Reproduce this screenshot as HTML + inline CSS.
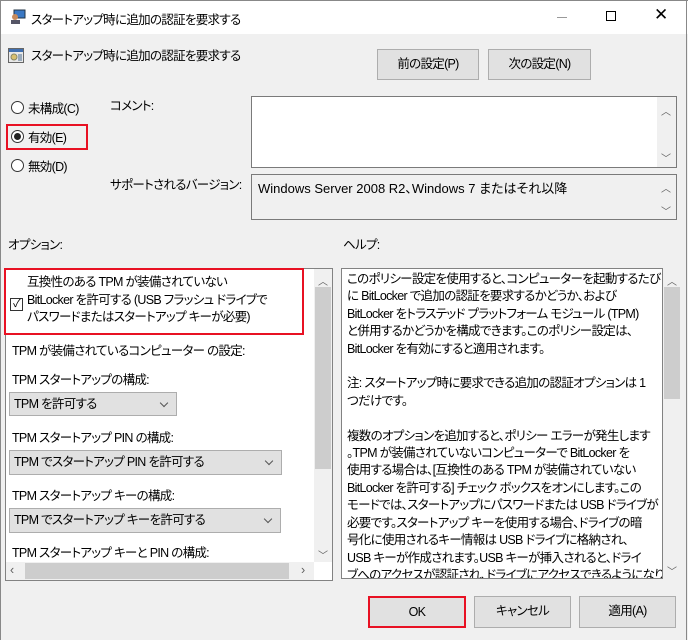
<!DOCTYPE html>
<html><head><meta charset="utf-8"><style>
*{margin:0;padding:0;box-sizing:border-box}
body{width:688px;height:640px;background:#f0f0f0;font-family:"Liberation Sans","Noto Sans CJK JP",sans-serif;font-size:12.5px;letter-spacing:-0.7px;color:#000;position:relative;overflow:hidden;font-feature-settings:"palt" 1}
.a{position:absolute;white-space:nowrap}
.btn{position:absolute;background:#e1e1e1;border:1px solid #adadad;text-align:center;line-height:28px}
.dd{position:absolute;background:#e1e1e1;border:1px solid #adadad;line-height:22px;padding-left:4px}
.dd:after{content:"";position:absolute;right:9px;top:7px;width:5px;height:5px;border-right:1px solid #555;border-bottom:1px solid #555;transform:rotate(45deg)}
.radio{position:absolute;width:13px;height:13px;border:1px solid #333;border-radius:50%;background:#fff}
.chev{position:absolute;font-size:10px;color:#606060}
</style></head><body>
<div class="a" style="left:0;top:0;width:688px;height:34px;background:#fff;border-top:1px solid #888"></div>
<div class="a" style="left:0;top:0;width:1px;height:640px;background:#888"></div>
<div class="a" style="right:1px;top:0;width:1px;height:640px;background:#888"></div>
<svg class="a" style="left:10px;top:9px" width="16" height="16"><rect x="4" y="1" width="11" height="8" fill="#3a78c4" stroke="#234"/><circle cx="5" cy="8" r="3" fill="#c88a5a"/><rect x="1" y="11" width="9" height="4" fill="#556"/></svg>
<div class="a" style="left:31px;top:9px">スタートアップ時に追加の認証を要求する</div>
<div class="a" style="left:557px;top:17px;width:10px;height:1px;background:#999"></div>
<div class="a" style="left:606px;top:11px;width:10px;height:10px;border:1px solid #000"></div>
<div class="a" style="left:654px;top:5px;font-size:17px">✕</div>
<svg class="a" style="left:8px;top:47px" width="16" height="16"><rect x="0.5" y="1.5" width="15" height="14" fill="#e8e8e8" stroke="#666"/><rect x="1" y="2" width="14" height="3" fill="#3f6fb0"/><circle cx="6" cy="10" r="3" fill="#d8c070" stroke="#886"/><rect x="10" y="7" width="4" height="7" fill="#9ab"/></svg>
<div class="a" style="left:31px;top:45px">スタートアップ時に追加の認証を要求する</div>
<div class="btn" style="left:377px;top:49px;width:102px;height:31px">前の設定(P)</div>
<div class="btn" style="left:488px;top:49px;width:103px;height:31px">次の設定(N)</div>
<div class="radio" style="left:11px;top:101px"></div><div class="a" style="left:28px;top:98px">未構成(C)</div>
<div class="a" style="left:6px;top:124px;width:82px;height:26px;border:2px solid #e81123"></div>
<div class="radio" style="left:11px;top:130px"></div><div class="a" style="left:14px;top:133px;width:7px;height:7px;border-radius:50%;background:#222"></div><div class="a" style="left:28px;top:127px">有効(E)</div>
<div class="radio" style="left:11px;top:159px"></div><div class="a" style="left:28px;top:156px">無効(D)</div>
<div class="a" style="left:110px;top:95px">コメント:</div>
<div class="a" style="left:110px;top:174px">サポートされるバージョン:</div>
<div class="a" style="left:251px;top:96px;width:426px;height:72px;background:#fff;border:1px solid #7a7a7a"></div>
<div class="a" style="left:657px;top:97px;width:19px;height:70px;background:#f0f0f0"></div>
<div class="chev" style="left:661px;top:103px">︿</div><div class="chev" style="left:661px;top:150px">﹀</div>
<div class="a" style="left:251px;top:174px;width:426px;height:46px;background:#f0f0f0;border:1px solid #7a7a7a"></div>
<div class="a" style="left:258px;top:178px;font-size:13px;letter-spacing:0">Windows Server 2008 R2、Windows 7 またはそれ以降</div>
<div class="chev" style="left:661px;top:180px">︿</div><div class="chev" style="left:661px;top:203px">﹀</div>
<div class="a" style="left:8px;top:234px">オプション:</div>
<div class="a" style="left:343px;top:234px">ヘルプ:</div>
<div class="a" style="left:5px;top:268px;width:328px;height:313px;background:#fff;border:1px solid #828282"></div>
<div class="a" style="left:314px;top:269px;width:18px;height:293px;background:#f0f0f0"></div>
<div class="a" style="left:315px;top:287px;width:16px;height:182px;background:#cdcdcd"></div>
<div class="chev" style="left:318px;top:273px">︿</div><div class="chev" style="left:318px;top:547px">﹀</div>
<div class="a" style="left:6px;top:562px;width:308px;height:18px;background:#f0f0f0"></div>
<div class="a" style="left:25px;top:563px;width:264px;height:16px;background:#cdcdcd"></div>
<div class="a" style="left:10px;top:563px;color:#606060">‹</div><div class="a" style="left:301px;top:563px;color:#606060">›</div>
<div class="a" style="left:4px;top:268px;width:300px;height:67px;border:2px solid #e81123"></div>
<div class="a" style="left:10px;top:298px;width:13px;height:13px;border:1px solid #333;background:#fff;font-size:11px;line-height:11px;text-align:center">✓</div>
<div class="a" style="left:27px;top:274px;line-height:17.5px">互換性のある TPM が装備されていない<br>BitLocker を許可する (USB フラッシュ ドライブで<br>パスワードまたはスタートアップ キーが必要)</div>
<div class="a" style="left:12px;top:340px">TPM が装備されているコンピューター の設定:</div>
<div class="a" style="left:12px;top:369px">TPM スタートアップの構成:</div>
<div class="dd" style="left:9px;top:392px;width:168px;height:24px">TPM を許可する</div>
<div class="a" style="left:12px;top:427px">TPM スタートアップ PIN の構成:</div>
<div class="dd" style="left:9px;top:450px;width:273px;height:25px">TPM でスタートアップ PIN を許可する</div>
<div class="a" style="left:12px;top:485px">TPM スタートアップ キーの構成:</div>
<div class="dd" style="left:9px;top:508px;width:272px;height:25px">TPM でスタートアップ キーを許可する</div>
<div class="a" style="left:12px;top:542px">TPM スタートアップ キーと PIN の構成:</div>
<div class="a" style="left:341px;top:268px;width:322px;height:311px;background:#fff;border:1px solid #828282;overflow:hidden">
<div style="position:absolute;left:5px;top:2px;line-height:17.4px;white-space:nowrap">このポリシー設定を使用すると、コンピューターを起動するたび<br>に BitLocker で追加の認証を要求するかどうか、および<br>BitLocker をトラステッド プラットフォーム モジュール (TPM)<br>と併用するかどうかを構成できます。このポリシー設定は、<br>BitLocker を有効にすると適用されます。<br><br>注: スタートアップ時に要求できる追加の認証オプションは 1<br>つだけです。<br><br>複数のオプションを追加すると、ポリシー エラーが発生します<br>。TPM が装備されていないコンピューターで BitLocker を<br>使用する場合は、[互換性のある TPM が装備されていない<br>BitLocker を許可する] チェック ボックスをオンにします。この<br>モードでは、スタートアップにパスワードまたは USB ドライブが<br>必要です。スタートアップ キーを使用する場合、ドライブの暗<br>号化に使用されるキー情報は USB ドライブに格納され、<br>USB キーが作成されます。USB キーが挿入されると、ドライ<br>ブへのアクセスが認証され、ドライブにアクセスできるようになり</div></div>
<div class="a" style="left:663px;top:268px;width:18px;height:311px;background:#f0f0f0"></div>
<div class="a" style="left:664px;top:287px;width:16px;height:112px;background:#cdcdcd"></div>
<div class="chev" style="left:667px;top:273px">︿</div><div class="chev" style="left:667px;top:563px">﹀</div>
<div class="btn" style="left:368px;top:596px;width:98px;height:32px;border:2px solid #e81123;line-height:28px">OK</div>
<div class="btn" style="left:474px;top:596px;width:97px;height:32px">キャンセル</div>
<div class="btn" style="left:579px;top:596px;width:97px;height:32px">適用(A)</div>
</body></html>
